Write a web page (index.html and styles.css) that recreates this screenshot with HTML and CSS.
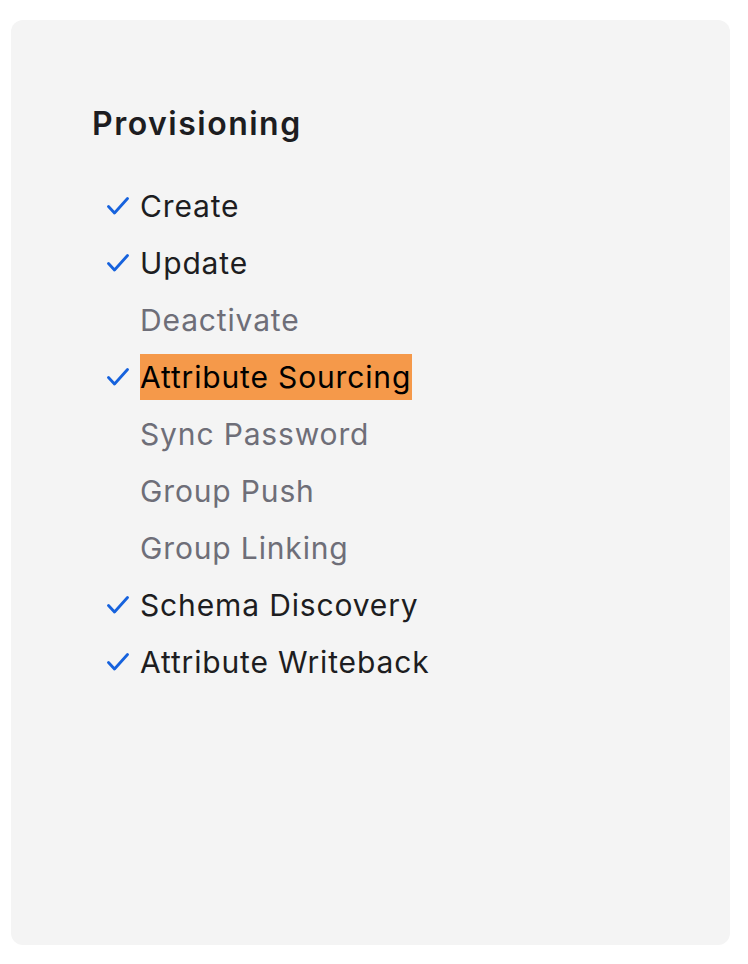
FILE: index.html
```html
<!DOCTYPE html>
<html>
<head>
<meta charset="utf-8">
<link rel="stylesheet" href="styles.css">
</head>
<body>
<div class="card">
  <h2 class="title">Provisioning</h2>
  <ul class="features">
    <li class="item on"><svg class="check" viewBox="0 0 22 18"><path d="M1.5 9.5 L7.5 16 L20.5 1.5"/></svg><span class="label">Create</span></li>
    <li class="item on"><svg class="check" viewBox="0 0 22 18"><path d="M1.5 9.5 L7.5 16 L20.5 1.5"/></svg><span class="label">Update</span></li>
    <li class="item off"><span class="label">Deactivate</span></li>
    <li class="item on"><svg class="check" viewBox="0 0 22 18"><path d="M1.5 9.5 L7.5 16 L20.5 1.5"/></svg><span class="label hl">Attribute Sourcing</span></li>
    <li class="item off"><span class="label">Sync Password</span></li>
    <li class="item off"><span class="label">Group Push</span></li>
    <li class="item off"><span class="label">Group Linking</span></li>
    <li class="item on"><svg class="check" viewBox="0 0 22 18"><path d="M1.5 9.5 L7.5 16 L20.5 1.5"/></svg><span class="label">Schema Discovery</span></li>
    <li class="item on"><svg class="check" viewBox="0 0 22 18"><path d="M1.5 9.5 L7.5 16 L20.5 1.5"/></svg><span class="label">Attribute Writeback</span></li>
  </ul>
</div>
</body>
</html>
```
FILE: styles.css
```css
html, body { margin: 0; padding: 0; background: #ffffff; }
body { font-family: Inter, "Noto Sans", sans-serif; }
.card {
  margin: 20px 18px 0 11px;
  height: 925px;
  box-sizing: border-box;
  background: #f4f4f4;
  border-radius: 12px;
  padding: 84px 0 0 81px;
}
.title {
  margin: 0;
  font-size: 32px;
  font-weight: 600;
  letter-spacing: 1.5px;
  line-height: 40px;
  color: #1d1d21;
}
.features {
  list-style: none;
  margin: 33px 0 0 0;
  padding: 0;
}
.item {
  display: flex;
  align-items: center;
  height: 57px;
  padding-left: 48px;
  position: relative;
  font-size: 30px;
  letter-spacing: 0.85px;
  color: #1d1d21;
}
.item.off { color: #6e6e78; }
.check {
  position: absolute;
  left: 15px;
  width: 22px;
  height: 18px;
  fill: none;
  stroke: #1662dd;
  stroke-width: 2.8;
  stroke-linecap: round;
  stroke-linejoin: round;
}
.label { display: inline-block; line-height: 46px; }
.hl { background: #f5994a; color: #000; padding-right: 1px; }
```
